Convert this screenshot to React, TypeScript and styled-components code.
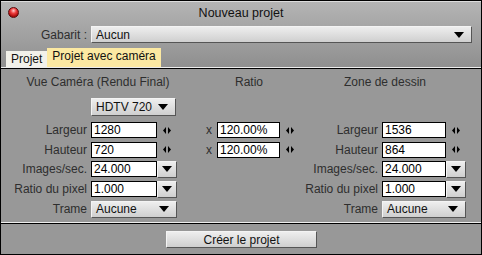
import React from 'react'
import styled, { createGlobalStyle } from 'styled-components'

// ── global ──────────────────────────────────────────────
const Global = createGlobalStyle`
  html, body { margin: 0; padding: 0; background: #fff; }
  * { box-sizing: border-box; }
  body { font-family: "Liberation Sans", Arial, sans-serif; font-size: 12px; }
`

// ── window shell ────────────────────────────────────────
const Window = styled.div`
  width: 482px;
  height: 255px;
  border: 1px solid #000;
  background: #989898;
  display: flex;
  flex-direction: column;
  overflow: hidden;
`

const Top = styled.div`
  background: linear-gradient(#b4b4b4, #8f8f8f);
  border-top: 1px solid #dcdcdc;
  border-bottom: 1px solid #eee;
  box-shadow: 0 1px 0 #000;
  margin-bottom: 1px;
`

const TitleBar = styled.div`
  height: 21px;
  display: grid;
  grid-template-columns: 24px 1fr 24px;
  align-items: center;
`

const CloseDot = styled.span`
  width: 11px;
  height: 11px;
  margin-left: 7px;
  border-radius: 50%;
  border: 1px solid #5a0a0a;
  background: radial-gradient(circle at 50% 30%, #ffd0d0 0%, #f04040 35%, #b01010 70%, #700 100%);
`

const Title = styled.div`
  text-align: center;
  color: #111;
  font-size: 12.5px;
`

const GabaritRow = styled.div`
  display: grid;
  grid-template-columns: 90px 381px;
  align-items: center;
  margin-top: 3px;
`

const Label = styled.span`
  color: #2e2e2e;
  text-align: right;
  padding-right: 4px;
  white-space: nowrap;
`

const SelectBox = styled.div<{ $w: number; $h?: number }>`
  width: ${({ $w }) => $w}px;
  height: ${({ $h }) => $h ?? 17}px;
  background: linear-gradient(#eeeeee, #cfcfcf);
  border-top: 1px solid #f4f4f4;
  border-left: 1px solid #f4f4f4;
  border-right: 1px solid #555;
  border-bottom: 1px solid #555;
  display: flex;
  align-items: center;
  justify-content: space-between;
  padding: 0 7px 0 4px;
  color: #111;
`

const TabStrip = styled.div`
  display: flex;
  align-items: flex-end;
  height: 24px;
  padding-left: 5px;
`

const Tab = styled.div<{ $active?: boolean }>`
  height: ${({ $active }) => ($active ? 19 : 16)}px;
  padding: 0 5px;
  background: ${({ $active }) => ($active ? '#fce9a2' : '#f2f1ea')};
  color: #111;
  display: flex;
  align-items: ${({ $active }) => ($active ? 'flex-start' : 'center')};
  padding-top: ${({ $active }) => ($active ? 1 : 0)}px;
`

// ── body grid ───────────────────────────────────────────
const Body = styled.div`
  display: grid;
  grid-template-columns: 90px 86px 40px 83px 82px 84px;
  grid-template-rows: 25px 26px 20px 19px 20px 20px 20px;
  align-items: center;
  padding-bottom: 3px;
  border-bottom: 1px solid #eee;
  box-shadow: 0 1px 0 #000;
  margin-bottom: 1px;
`

const ColHead = styled.div<{ $col: string; $shift: number }>`
  grid-column: ${({ $col }) => $col};
  grid-row: 1;
  text-align: center;
  padding-left: ${({ $shift }) => $shift}px;
  color: #2e2e2e;
  white-space: nowrap;
`

const Cell = styled.div<{ $col: number; $row: number }>`
  grid-column: ${({ $col }) => $col};
  grid-row: ${({ $row }) => $row};
  display: flex;
  align-items: center;
  justify-content: ${({ $col }) => ($col === 1 || $col === 3 || $col === 5 ? 'flex-end' : 'flex-start')};
`

const Field = styled.div<{ $w: number }>`
  width: ${({ $w }) => $w}px;
  height: 16px;
  background: #fff;
  border: 1px solid #000;
  color: #000;
  padding-left: 2px;
  line-height: 14px;
`

const SideBtn = styled.div`
  width: 20px;
  height: 17px;
  background: linear-gradient(#eeeeee, #cfcfcf);
  border-top: 1px solid #f4f4f4;
  border-left: 1px solid #f4f4f4;
  border-right: 1px solid #555;
  border-bottom: 1px solid #555;
  display: flex;
  align-items: center;
  justify-content: center;
`

const SpinSlot = styled.div`
  width: 20px;
  display: flex;
  justify-content: center;
`

const Times = styled.span`
  color: #2e2e2e;
  padding-right: 5px;
`

// ── footer ──────────────────────────────────────────────
const Footer = styled.div`
  flex: 1;
  display: flex;
  justify-content: center;
  padding-top: 7px;
  padding-left: 1px;
`

const CreateButton = styled.button`
  width: 151px;
  height: 17px;
  padding: 0;
  font-family: inherit;
  font-size: 12px;
  color: #111;
  background: linear-gradient(#eeeeee, #cfcfcf);
  border: none;
  border-top: 1px solid #f4f4f4;
  border-left: 1px solid #f4f4f4;
  border-right: 1px solid #555;
  border-bottom: 1px solid #555;
`

// ── drawings ────────────────────────────────────────────
const Caret = () => (
  <svg width="10" height="6" viewBox="0 0 10 6">
    <polygon points="0,0 10,0 5,6" fill="#000" />
  </svg>
)

const Spin = () => (
  <svg width="8" height="7" viewBox="0 0 8 7">
    <polygon points="0,3.5 3,0 3,7" fill="#000" />
    <polygon points="5,0 8,3.5 5,7" fill="#000" />
  </svg>
)

type Side = { col: number; ctrl: number; width: number }

export default function App() {
  const sides: { s: Side; w: string; h: string }[] = [
    { s: { col: 1, ctrl: 2, width: 66 }, w: '1280', h: '720' },
    { s: { col: 5, ctrl: 6, width: 64 }, w: '1536', h: '864' },
  ]

  return (
    <>
      <Global />
      <Window>
        <Top>
          <TitleBar>
            <CloseDot />
            <Title>Nouveau projet</Title>
            <span />
          </TitleBar>
          <GabaritRow>
            <Label>Gabarit :</Label>
            <SelectBox $w={381}>
              <span>Aucun</span>
              <Caret />
            </SelectBox>
          </GabaritRow>
          <TabStrip>
            <Tab>Projet</Tab>
            <Tab $active>Projet avec caméra</Tab>
          </TabStrip>
        </Top>

        <Body>
          <ColHead $col="1 / 3" $shift={18}>Vue Caméra (Rendu Final)</ColHead>
          <ColHead $col="3 / 5" $shift={21}>Ratio</ColHead>
          <ColHead $col="5 / 7" $shift={4}>Zone de dessin</ColHead>

          <Cell $col={2} $row={2}>
            <SelectBox $w={85} $h={18}>
              <span>HDTV 720</span>
              <Caret />
            </SelectBox>
          </Cell>

          {sides.map(({ s, w, h }) => (
            <React.Fragment key={s.col}>
              <Cell $col={s.col} $row={3}><Label>Largeur</Label></Cell>
              <Cell $col={s.ctrl} $row={3}>
                <Field $w={s.width}>{w}</Field>
                <SpinSlot><Spin /></SpinSlot>
              </Cell>
              <Cell $col={s.col} $row={4}><Label>Hauteur</Label></Cell>
              <Cell $col={s.ctrl} $row={4}>
                <Field $w={s.width}>{h}</Field>
                <SpinSlot><Spin /></SpinSlot>
              </Cell>
              <Cell $col={s.col} $row={5}><Label>Images/sec.</Label></Cell>
              <Cell $col={s.ctrl} $row={5}>
                <Field $w={s.width}>24.000</Field>
                <SideBtn><Caret /></SideBtn>
              </Cell>
              <Cell $col={s.col} $row={6}><Label>Ratio du pixel</Label></Cell>
              <Cell $col={s.ctrl} $row={6}>
                <Field $w={s.width}>1.000</Field>
                <SideBtn><Caret /></SideBtn>
              </Cell>
              <Cell $col={s.col} $row={7}><Label>Trame</Label></Cell>
              <Cell $col={s.ctrl} $row={7}>
                <SelectBox $w={s.width + 20}>
                  <span>Aucune</span>
                  <Caret />
                </SelectBox>
              </Cell>
            </React.Fragment>
          ))}

          <Cell $col={3} $row={3}><Times>x</Times></Cell>
          <Cell $col={4} $row={3}>
            <Field $w={63}>120.00%</Field>
            <SpinSlot><Spin /></SpinSlot>
          </Cell>
          <Cell $col={3} $row={4}><Times>x</Times></Cell>
          <Cell $col={4} $row={4}>
            <Field $w={63}>120.00%</Field>
            <SpinSlot><Spin /></SpinSlot>
          </Cell>
        </Body>

        <Footer>
          <CreateButton>Créer le projet</CreateButton>
        </Footer>
      </Window>
    </>
  )
}
